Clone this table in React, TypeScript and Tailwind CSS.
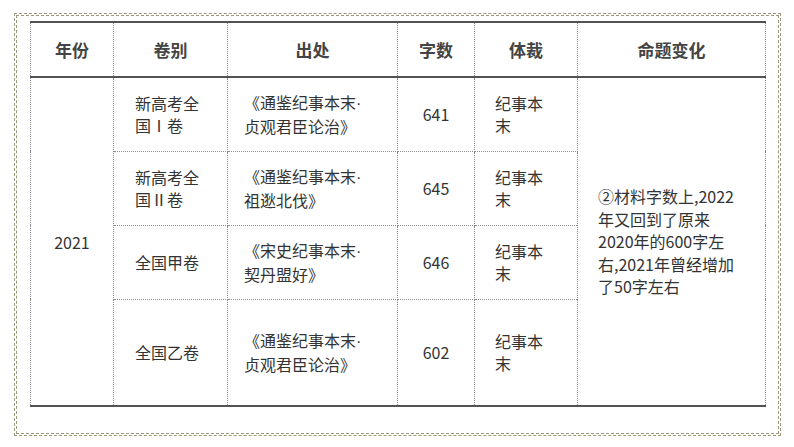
import React from 'react';

const font = { fontFamily: '"Noto Sans CJK SC", "Noto Sans", sans-serif' };

const rows = [
  { paper: ['新高考全', '国Ⅰ卷'], source: ['《通鉴纪事本末', '贞观君臣论治》'], count: '641', h: 'h-[74px]' },
  { paper: ['新高考全', '国Ⅱ卷'], source: ['《通鉴纪事本末', '祖逖北伐》'], count: '645', h: 'h-[74px]' },
  { paper: ['全国甲卷'], source: ['《宋史纪事本末', '契丹盟好》'], count: '646', h: 'h-[74px]' },
  { paper: ['全国乙卷'], source: ['《通鉴纪事本末', '贞观君臣论治》'], count: '602', h: 'h-[107px]' },
];

const note = ['②材料字数上,2022', '年又回到了原来', '2020年的600字左', '右,2021年曾经增加', '了50字左右'];

const cell = 'border border-dotted border-[#8c8c8c] align-middle';

function Lines({ items }: { items: string[] }) {
  return (
    <>
      {items.map((t, i) => (
        <div key={i}>{t}</div>
      ))}
    </>
  );
}

export default function App() {
  return (
    <div className="w-[794px] h-[447px] bg-white pt-[13px] pl-[14px]" style={font}>
      <div className="w-[767px] h-[423px] border border-dashed border-[#9a987a] p-px">
        <div className="h-full border border-dashed border-[#9a987a] pt-[5px] pl-[13px]">
          <table className="table-fixed border-collapse w-[735px] border-y-2 border-solid border-[#525252] text-[16px] leading-[22px] text-[#333]">
            <colgroup>
              <col className="w-[83px]" />
              <col className="w-[114px]" />
              <col className="w-[170px]" />
              <col className="w-[77px]" />
              <col className="w-[103px]" />
              <col className="w-[188px]" />
            </colgroup>
            <thead className="border-b-2 border-solid border-[#525252]">
              <tr className="h-[55px] text-[17px] font-bold text-[#444]">
                <th className={cell}>年份</th>
                <th className={cell}>卷别</th>
                <th className={cell}>出处</th>
                <th className={cell}>字数</th>
                <th className={cell}>体裁</th>
                <th className={cell}>命题变化</th>
              </tr>
            </thead>
            <tbody>
              {rows.map((r, i) => (
                <tr key={i} className={r.h}>
                  {i === 0 && (
                    <td rowSpan={4} className={`${cell} text-center`}>
                      2021
                    </td>
                  )}
                  <td className={`${cell} pl-[21px]`}>
                    <Lines items={r.paper} />
                  </td>
                  <td className={`${cell} pl-[16px]`}>
                    <div>
                      {r.source[0]}
                      <span style={{ fontFamily: '"Liberation Sans", sans-serif' }}>·</span>
                    </div>
                    <div>{r.source[1]}</div>
                  </td>
                  <td className={`${cell} text-center`}>{r.count}</td>
                  <td className={`${cell} pl-[20px]`}>
                    <Lines items={['纪事本', '末']} />
                  </td>
                  {i === 0 && (
                    <td rowSpan={4} className={`${cell} pl-[20px] leading-[22.5px]`}>
                      <Lines items={note} />
                    </td>
                  )}
                </tr>
              ))}
            </tbody>
          </table>
        </div>
      </div>
    </div>
  );
}
